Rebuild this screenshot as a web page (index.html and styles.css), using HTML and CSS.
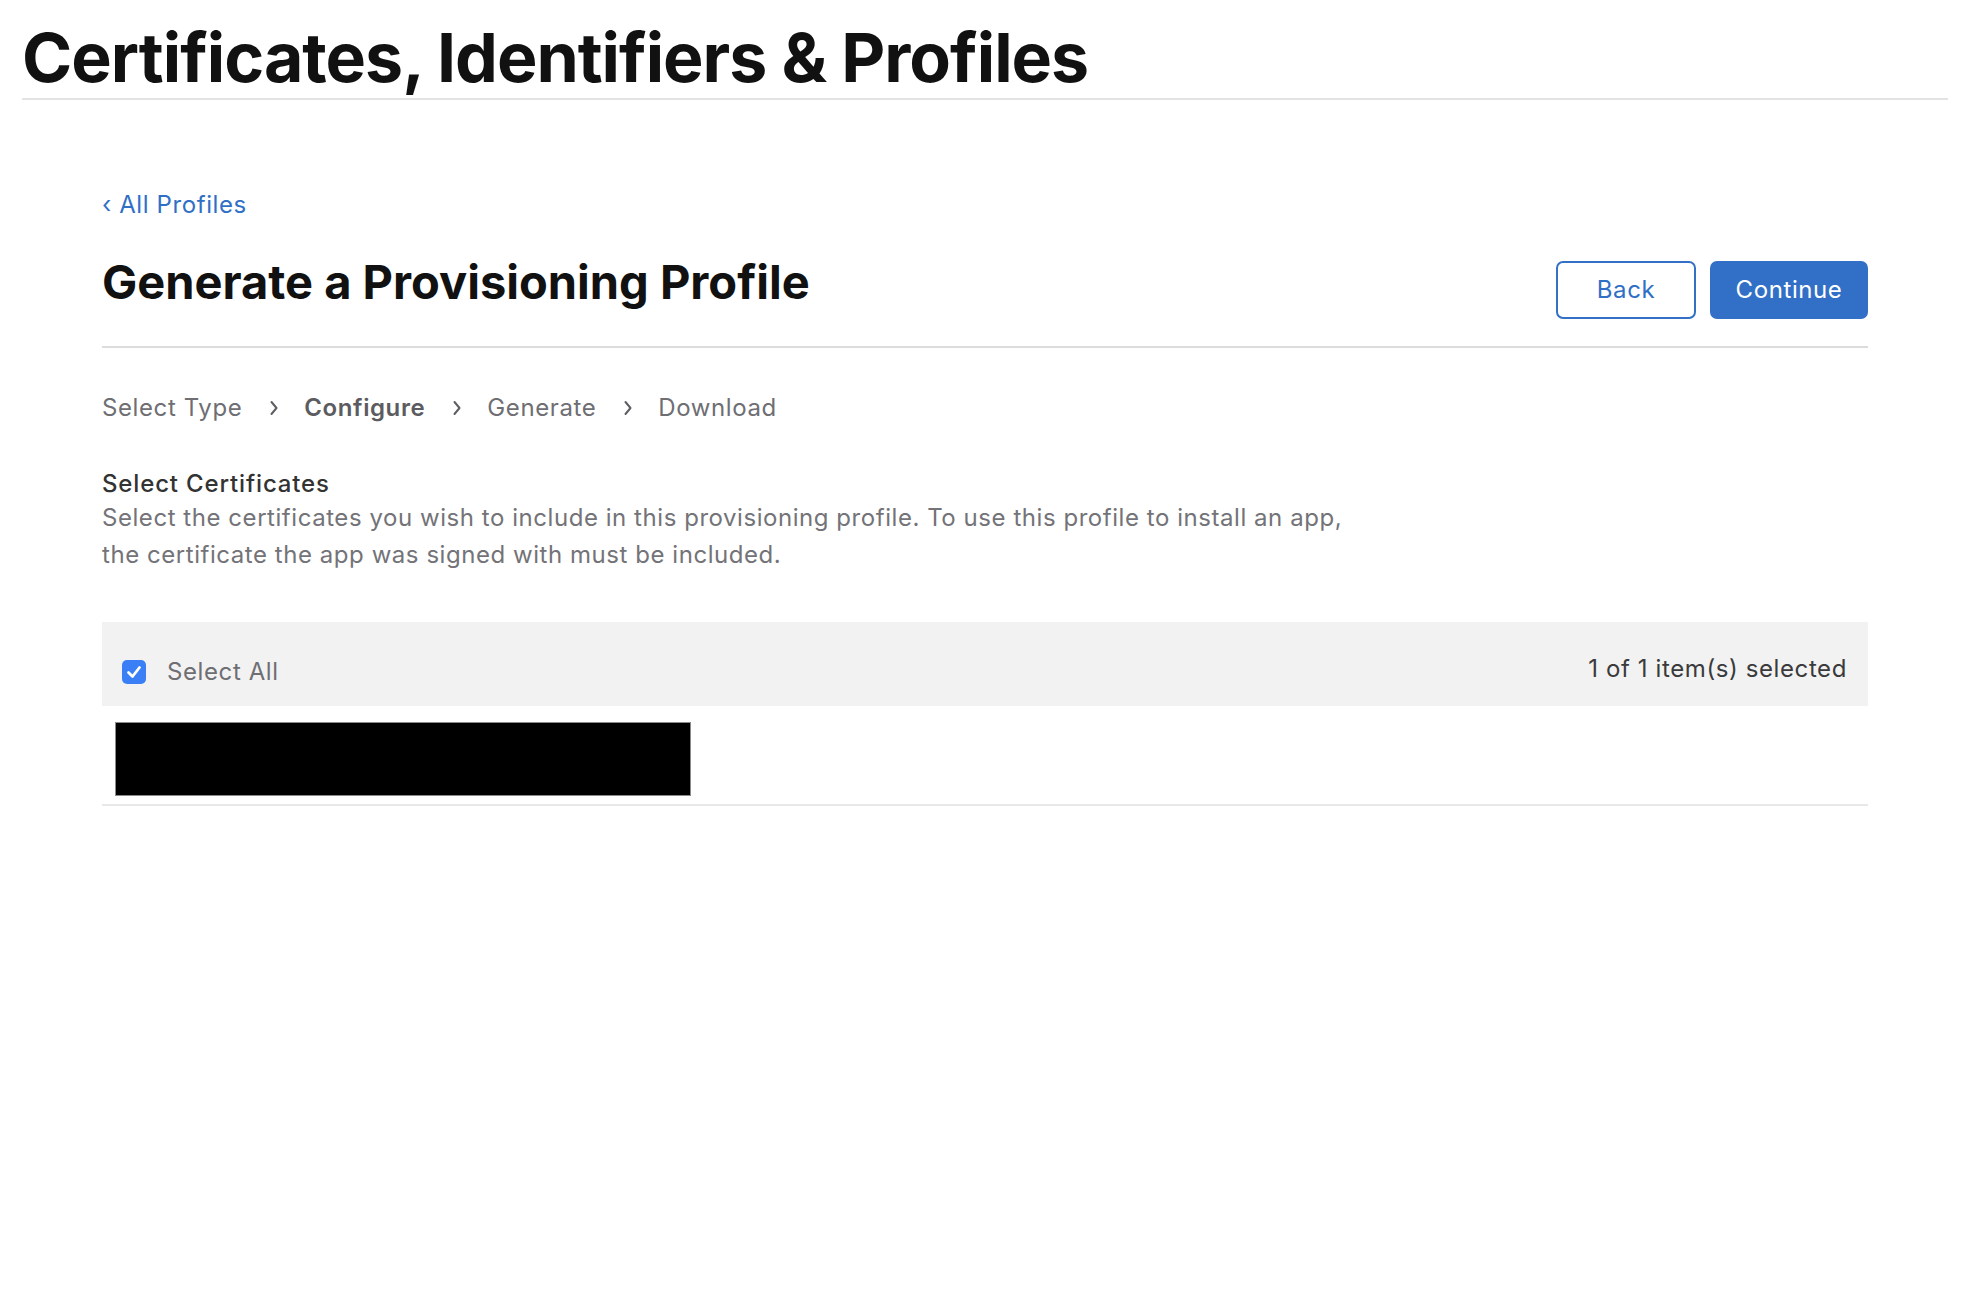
FILE: index.html
```html
<!DOCTYPE html>
<html lang="en">
<head>
<meta charset="utf-8">
<title>Certificates, Identifiers &amp; Profiles</title>
<link rel="stylesheet" href="styles.css">
</head>
<body>
<header class="site-header">
  <h1 class="site-title">Certificates, Identifiers &amp; Profiles</h1>
</header>
<main class="content">
  <a class="back-link" href="#"><span class="back-chevron">‹</span> All Profiles</a>
  <div class="page-head">
    <h2 class="page-title">Generate a Provisioning Profile</h2>
    <div class="actions">
      <button class="btn btn-secondary" type="button">Back</button>
      <button class="btn btn-primary" type="button">Continue</button>
    </div>
  </div>
  <ol class="steps">
    <li class="step">Select Type</li>
    <li class="sep"><svg width="10" height="18" viewBox="0 0 10 18"><polyline points="2.5,3 7.5,9 2.5,15" fill="none" stroke="#5e5e63" stroke-width="2" stroke-linecap="round" stroke-linejoin="round"/></svg></li>
    <li class="step step-current">Configure</li>
    <li class="sep"><svg width="10" height="18" viewBox="0 0 10 18"><polyline points="2.5,3 7.5,9 2.5,15" fill="none" stroke="#5e5e63" stroke-width="2" stroke-linecap="round" stroke-linejoin="round"/></svg></li>
    <li class="step">Generate</li>
    <li class="sep"><svg width="10" height="18" viewBox="0 0 10 18"><polyline points="2.5,3 7.5,9 2.5,15" fill="none" stroke="#5e5e63" stroke-width="2" stroke-linecap="round" stroke-linejoin="round"/></svg></li>
    <li class="step">Download</li>
  </ol>
  <section class="section">
    <h3 class="section-title">Select Certificates</h3>
    <p class="section-desc">Select the certificates you wish to include in this provisioning profile. To use this profile to install an app, the certificate the app was signed with must be included.</p>
  </section>
  <div class="table">
    <div class="table-head">
      <label class="select-all">
        <span class="checkbox"><svg width="24" height="24" viewBox="0 0 24 24"><rect x="0" y="0" width="24" height="24" rx="5" fill="#3a7ff6"/><polyline points="6.5,12.5 10.5,16.5 17.5,7.5" fill="none" stroke="#fff" stroke-width="2.8" stroke-linecap="round" stroke-linejoin="round"/></svg></span>
        <span class="select-all-label">Select All</span>
      </label>
      <span class="count">1 of 1 item(s) selected</span>
    </div>
    <div class="table-row">
      <div class="redacted"></div>
    </div>
  </div>
</main>
</body>
</html>
```
FILE: styles.css
```css
* { box-sizing: border-box; }
html, body { margin: 0; padding: 0; background: #fff; }
body { font-family: "Inter", "Noto Sans", "Liberation Sans", sans-serif; color: #1d1d1f; }

.site-header {
  margin: 0 30px 0 22px;
  border-bottom: 2px solid #e3e3e3;
}
.site-title {
  margin: 0;
  padding: 16px 0 0 0;
  font-size: 68px;
  line-height: 82px;
  font-weight: 700;
  letter-spacing: -1px;
  color: #111;
}

.content {
  margin-left: 102px;
  width: 1766px;
  padding-top: 91px;
}

.back-link {
  display: inline-block;
  font-size: 24px;
  line-height: 28px;
  letter-spacing: 0.6px;
  color: #2f6fc6;
  text-decoration: none;
}

.page-head {
  display: flex;
  justify-content: space-between;
  align-items: flex-start;
  margin-top: 35px;
  padding-bottom: 27px;
  border-bottom: 2px solid #dcdcdc;
}
.page-title {
  margin: 0;
  font-size: 47px;
  line-height: 56px;
  font-weight: 700;
  color: #111;
}
.actions { display: flex; gap: 14px; margin-top: 7px; }
.btn {
  height: 58px;
  border-radius: 7px;
  font-family: inherit;
  font-size: 24px;
  letter-spacing: 0.6px;
  padding: 0 0 2px 0;
  cursor: pointer;
}
.btn-secondary {
  width: 140px;
  background: #fff;
  color: #2f6fc6;
  border: 2px solid #3371c7;
}
.btn-primary {
  width: 158px;
  background: #3170c6;
  color: #fff;
  border: 0;
}

.steps {
  list-style: none;
  margin: 46px 0 0 0;
  padding: 0;
  display: flex;
  align-items: center;
  font-size: 24px;
  line-height: 28px;
  letter-spacing: 0.6px;
  color: #6e6e73;
}
.step-current { font-weight: 600; color: #5c5c60; }
.sep { margin: 0 25px 0 27px; display: flex; align-items: center; }

.section { margin-top: 47px; }
.section-title {
  margin: 0;
  font-size: 24px;
  line-height: 30px;
  letter-spacing: 0.85px;
  font-weight: 500;
  color: #333;
}
.section-desc {
  margin: 1px 0 0 0;
  max-width: 1262px;
  font-size: 24px;
  line-height: 36.5px;
  letter-spacing: 0.55px;
  color: #737378;
}

.table { margin-top: 49px; }
.table-head {
  height: 84px;
  background: #f2f2f2;
  display: flex;
  justify-content: space-between;
  align-items: flex-start;
  padding: 33px 21px 0 20px;
}
.select-all { display: flex; align-items: center; gap: 21px; margin-top: 3px; }
.checkbox { display: flex; width: 24px; height: 24px; }
.select-all-label { font-size: 24px; line-height: 28px; letter-spacing: 0.6px; color: #6e6e73; }
.count { font-size: 24px; line-height: 28px; letter-spacing: 0.6px; color: #3a3a3c; }

.table-row {
  padding: 16px 13px 8px 13px;
  border-bottom: 2px solid #e8e8e8;
}
.redacted {
  width: 576px;
  height: 74px;
  background: #000;
  border: 1px solid #8a8a8a;
}
```
